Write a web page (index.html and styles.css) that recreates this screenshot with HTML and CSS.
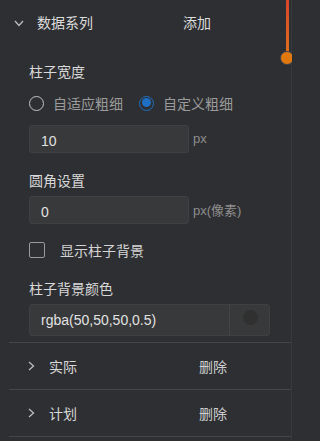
FILE: index.html
```html
<!DOCTYPE html>
<html lang="zh">
<head>
<meta charset="utf-8">
<link rel="stylesheet" href="styles.css">
</head>
<body>
<div class="panel">
  <div class="series-head">
    <svg class="chev-down" width="10" height="7" viewBox="0 0 10 7"><path d="M1 1 L5 5.5 L9 1" fill="none" stroke="#bdbdbd" stroke-width="1.3"/></svg>
    <span class="series-name">数据系列</span>
    <span class="series-action">添加</span>
  </div>

  <div class="content">
    <div class="label first">柱子宽度</div>
    <div class="radio-row">
      <label class="radio"><span class="radio-dot"></span><span class="radio-text">自适应粗细</span></label>
      <label class="radio checked"><span class="radio-dot"></span><span class="radio-text">自定义粗细</span></label>
    </div>
    <div class="input-row">
      <div class="input">10</div>
      <span class="unit">px</span>
    </div>

    <div class="label second">圆角设置</div>
    <div class="input-row tight">
      <div class="input">0</div>
      <span class="unit">px(像素)</span>
    </div>

    <div class="check-row">
      <span class="checkbox"></span>
      <span class="check-text">显示柱子背景</span>
    </div>

    <div class="label third">柱子背景颜色</div>
    <div class="color-input">
      <div class="color-value">rgba(50,50,50,0.5)</div>
      <div class="color-swatch"><span class="swatch-dot"></span></div>
    </div>
  </div>

  <div class="list">
    <div class="item">
      <svg class="chev-right" width="7" height="10" viewBox="0 0 7 10"><path d="M1 1 L5.5 5 L1 9" fill="none" stroke="#bdbdbd" stroke-width="1.3"/></svg>
      <span class="item-name">实际</span>
      <span class="item-action">删除</span>
    </div>
    <div class="item">
      <svg class="chev-right" width="7" height="10" viewBox="0 0 7 10"><path d="M1 1 L5.5 5 L1 9" fill="none" stroke="#bdbdbd" stroke-width="1.3"/></svg>
      <span class="item-name">计划</span>
      <span class="item-action">删除</span>
    </div>
  </div>

  <div class="scroll-line"></div>
  <div class="scroll-knob"></div>
</div>
</body>
</html>
```

FILE: styles.css
```css
html, body {
  margin: 0;
  padding: 0;
  background: #2e2f32;
}
body {
  width: 292px;
  height: 441px;
  overflow: hidden;
  font-family: "Liberation Sans", "Noto Sans CJK SC", sans-serif;
  font-size: 14px;
  color: #d6d6d6;
}
.panel {
  position: relative;
  width: 292px;
  height: 441px;
  box-sizing: border-box;
  border-right: 1px solid #38393b;
}
.series-head {
  height: 44px;
  display: flex;
  align-items: center;
  padding-left: 14px;
}
.chev-down {
  width: 10px;
  height: 7px;
  margin-top: 2px;
}
.series-name {
  margin-left: 13px;
  width: 146px;
  color: #dcdcdc;
  font-family: "Noto Sans CJK SC", sans-serif;
  line-height: 20px;
}
.series-action {
  color: #dcdcdc;
  font-family: "Noto Sans CJK SC", sans-serif;
  line-height: 20px;
}
.content {
  padding: 0 21px 0 29px;
  display: flex;
  flex-direction: column;
}
.label {
  font-family: "Noto Sans CJK SC", sans-serif;
  line-height: 20px;
  height: 20px;
  color: #d8d8d8;
}
.label.first { margin-top: 17px; }
.label.second { margin-top: 17px; }
.label.third { margin-top: 18px; }
.radio-row {
  display: flex;
  align-items: center;
  height: 20px;
  margin-top: 12px;
}
.radio {
  display: flex;
  align-items: center;
  margin-right: 16px;
}
.radio-dot {
  width: 15px;
  height: 15px;
  box-sizing: border-box;
  border: 1.3px solid #c4c4c4;
  border-radius: 50%;
  position: relative;
}
.radio.checked .radio-dot {
  border-color: #1f6fc2;
  border-width: 1.5px;
}
.radio.checked .radio-dot::after {
  content: "";
  position: absolute;
  left: 1.5px;
  top: 1.5px;
  width: 9px;
  height: 9px;
  border-radius: 50%;
  background: #1f6fc2;
}
.radio-text {
  margin-left: 9px;
  color: #9b9b9b;
  font-family: "Noto Sans CJK SC", sans-serif;
  line-height: 20px;
}
.input-row {
  display: flex;
  align-items: center;
  margin-top: 12px;
}
.input-row.tight { margin-top: 6px; }
.input {
  width: 160px;
  height: 28px;
  box-sizing: border-box;
  background: #38393a;
  border: 1px solid #3f4041;
  border-radius: 3px;
  padding-left: 11px;
  line-height: 28px;
  color: #e2e2e2;
  font-size: 14px;
  padding-top: 1px;
}
.unit {
  margin-left: 4px;
  color: #8e8e8e;
  font-size: 13px;
  margin-top: -2px;
}
.check-row {
  display: flex;
  align-items: center;
  height: 20px;
  margin-top: 16px;
}
.checkbox {
  width: 16px;
  height: 16px;
  box-sizing: border-box;
  border: 1.2px solid #9a9a9a;
  border-radius: 2px;
}
.check-text {
  margin-left: 15px;
  color: #d4d4d4;
  font-family: "Noto Sans CJK SC", sans-serif;
  line-height: 20px;
}
.color-input {
  margin-top: 6px;
  height: 32px;
  box-sizing: border-box;
  display: flex;
  background: #38393a;
  border: 1px solid #3f4041;
  border-radius: 3px;
}
.color-value {
  flex: 1;
  padding-left: 11px;
  line-height: 30px;
  color: #e2e2e2;
  font-size: 14px;
  border-right: 1px solid #444546;
}
.color-swatch {
  width: 39px;
  display: flex;
  align-items: center;
  justify-content: center;
}
.swatch-dot {
  width: 15px;
  height: 15px;
  border-radius: 50%;
  background: #303030;
  margin-top: -5px;
  margin-left: 1px;
}
.list {
  margin-top: 6px;
  margin-left: 9px;
  border-top: 1px solid #454648;
}
.item {
  height: 46px;
  display: flex;
  align-items: center;
  border-bottom: 1px solid #454648;
  padding-left: 19px;
}
.chev-right {
  width: 7px;
  height: 10px;
}
.item-name {
  margin-left: 14px;
  width: 150px;
  color: #d8d8d8;
  font-family: "Noto Sans CJK SC", sans-serif;
  line-height: 20px;
}
.item-action {
  color: #cfcfcf;
  font-family: "Noto Sans CJK SC", sans-serif;
  line-height: 20px;
}
.scroll-line {
  position: absolute;
  left: 286px;
  top: 0;
  width: 3px;
  height: 54px;
  background: linear-gradient(#d8452c, #e0701c);
}
.scroll-knob {
  position: absolute;
  left: 280px;
  top: 51px;
  width: 12px;
  height: 12px;
  border-radius: 50%;
  background: #e0780f;
  border: 1.5px solid #3a4650;
}
```
